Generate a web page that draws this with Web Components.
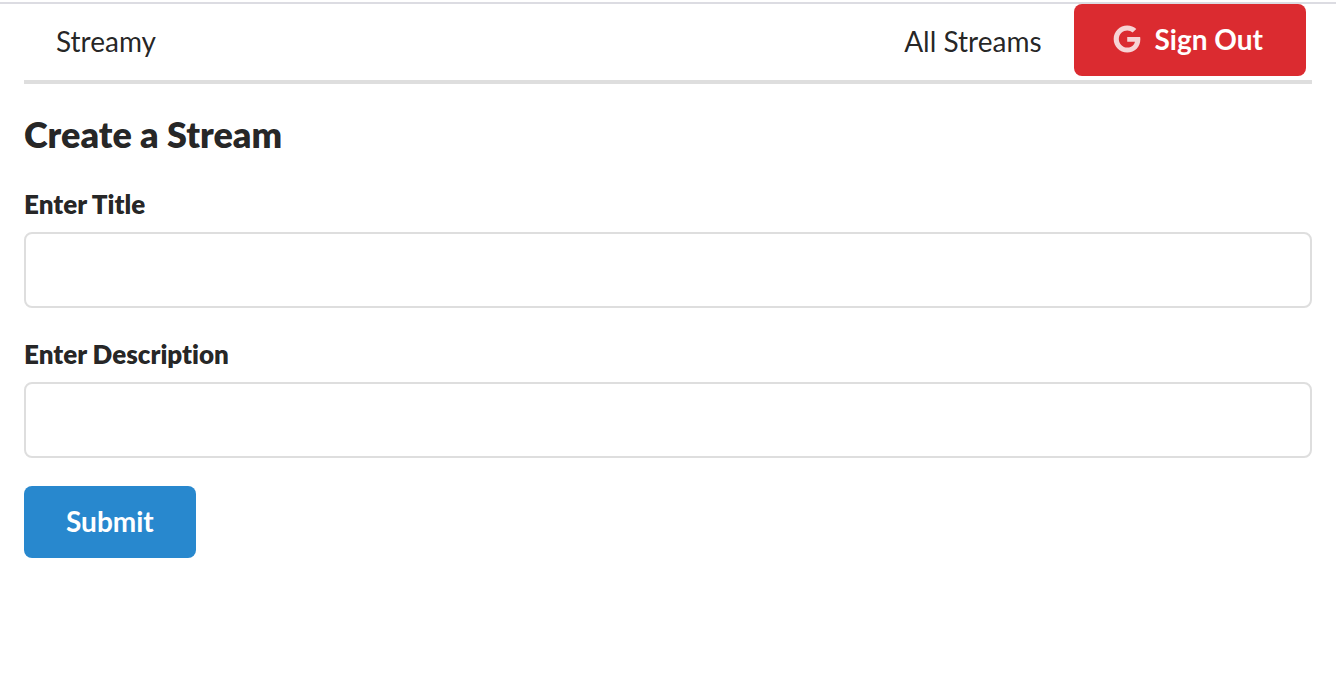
<!DOCTYPE html>
<html lang="en">
<head>
<meta charset="utf-8">
<title>Streamy</title>
<style>
html { background: #fff; }
body { margin: 0; font-family: Lato, "Liberation Sans", sans-serif; font-size: 28px; line-height: 40px; font-variant-ligatures: none; color: rgba(0,0,0,.87); }
</style>
</head>
<body>
<stream-app></stream-app>
<script>
const define = (name, html, setup) => customElements.define(name, class extends HTMLElement {
  constructor() {
    super();
    this.attachShadow({ mode: "open" }).innerHTML = html;
  }
  connectedCallback() { if (setup) setup(this, this.shadowRoot); }
});

define("nav-link", `
<style>
:host { display: block; }
a { display: block; padding: 0 32px; color: inherit; text-decoration: none; line-height: 36px; }
</style>
<a href="#"><slot></slot></a>`);

define("google-button", `
<style>
:host { display: block; }
button { display: flex; align-items: center; justify-content: center; gap: 14px; height: 72px; margin: 0; padding: 0 43px 2px 39px; border: 0; border-radius: 8px; background: #db2b30; color: #fff; font: inherit; font-variant-ligatures: inherit; font-weight: 700; line-height: 28px; cursor: pointer; }
svg { display: block; width: 28px; height: 28px; opacity: .8; }
</style>
<button type="button">
<svg viewBox="0 0 488 512" aria-hidden="true"><path fill="#fff" d="M488 261.8C488 403.3 391.1 504 248 504 110.8 504 0 393.2 0 256S110.8 8 248 8c66.8 0 123 24.5 166.3 64.9l-67.5 64.9C258.5 52.6 94.3 116.6 94.3 256c0 86.5 69.1 156.6 153.7 156.6 98.2 0 135-70.4 140.8-106.9H248v-85.3h236.1c2.3 12.7 3.9 24.9 3.9 41.4z"/></svg>
<span><slot></slot></span>
</button>`);

define("site-header", `
<style>
:host { display: block; border-bottom: 4px solid #dedede; }
nav { display: flex; align-items: flex-start; height: 76px; }
nav-link { padding-top: 19px; }
.right { display: flex; align-items: flex-start; margin-left: auto; padding-right: 6px; }
</style>
<nav>
<nav-link>Streamy</nav-link>
<div class="right"><nav-link>All Streams</nav-link><google-button>Sign Out</google-button></div>
</nav>`);

define("text-field", `
<style>
:host { display: block; }
label { display: block; margin-bottom: 8px; font-size: 26px; font-weight: 800; line-height: 40px; }
input { display: block; box-sizing: border-box; width: 100%; height: 76px; margin: 0; padding: 0 28px; border: 2px solid #dedede; border-radius: 8px; background: #fff; color: inherit; font: inherit; outline: 0; }
input:focus { border-color: #85b7d9; }
</style>
<label for="field"></label>
<input id="field" type="text" autocomplete="off">`, (host, root) => {
  root.querySelector("label").textContent = host.getAttribute("label");
});

define("stream-form", `
<style>
:host { display: block; }
form { display: flex; flex-direction: column; align-items: stretch; gap: 26px; margin: 0; }
button { align-self: flex-start; height: 72px; margin: 2px 0 0; padding: 0 42px 2px; border: 0; border-radius: 8px; background: #2888ce; color: #fff; font: inherit; font-variant-ligatures: inherit; font-weight: 700; cursor: pointer; }
</style>
<form>
<text-field label="Enter Title"></text-field>
<text-field label="Enter Description"></text-field>
<button type="submit">Submit</button>
</form>`, (host, root) => {
  root.querySelector("form").addEventListener("submit", e => e.preventDefault());
});

define("stream-app", `
<style>
:host { display: block; border-top: 2px solid #dcdce2; margin-top: 2px; }
main { padding: 0 24px; }
h3 { margin: 26px 0; font-size: 36px; font-weight: 800; line-height: 48px; }
</style>
<main>
<site-header></site-header>
<h3>Create a Stream</h3>
<stream-form></stream-form>
</main>`);
</script>
</body>
</html>
